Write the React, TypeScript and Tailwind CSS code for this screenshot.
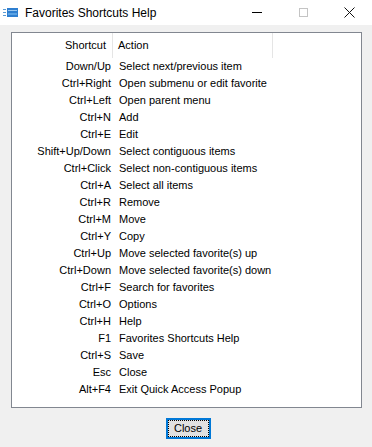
import React from 'react';

const rows: [string, string][] = [
  ['Down/Up', 'Select next/previous item'],
  ['Ctrl+Right', 'Open submenu or edit favorite'],
  ['Ctrl+Left', 'Open parent menu'],
  ['Ctrl+N', 'Add'],
  ['Ctrl+E', 'Edit'],
  ['Shift+Up/Down', 'Select contiguous items'],
  ['Ctrl+Click', 'Select non-contiguous items'],
  ['Ctrl+A', 'Select all items'],
  ['Ctrl+R', 'Remove'],
  ['Ctrl+M', 'Move'],
  ['Ctrl+Y', 'Copy'],
  ['Ctrl+Up', 'Move selected favorite(s) up'],
  ['Ctrl+Down', 'Move selected favorite(s) down'],
  ['Ctrl+F', 'Search for favorites'],
  ['Ctrl+O', 'Options'],
  ['Ctrl+H', 'Help'],
  ['F1', 'Favorites Shortcuts Help'],
  ['Ctrl+S', 'Save'],
  ['Esc', 'Close'],
  ['Alt+F4', 'Exit Quick Access Popup'],
];

function AppIcon() {
  return (
    <svg width="16" height="12" viewBox="0 0 16 12">
      <rect x="0" y="2" width="3" height="1" fill="#5a9bd5" />
      <rect x="0" y="5" width="3" height="1" fill="#5a9bd5" />
      <rect x="0" y="8" width="3" height="1" fill="#5a9bd5" />
      <rect x="4" y="1" width="11" height="9" fill="#2f7fd0" />
      <rect x="5" y="3" width="9" height="1" fill="#9cc8ef" />
      <rect x="5" y="6" width="9" height="2" fill="#5aa2e3" />
    </svg>
  );
}

export default function App() {
  return (
    <div
      className="flex h-[447px] w-[372px] flex-col bg-[#f0f0f0] text-[11px] text-black"
      style={{ fontFamily: '"Liberation Sans", Arial, sans-serif' }}
    >
      <div className="flex h-[25px] shrink-0 items-center bg-white">
        <div className="ml-[3px] mr-[6px] flex items-center">
          <AppIcon />
        </div>
        <span className="text-[12px]">Favorites Shortcuts Help</span>
        <div className="ml-auto flex h-full items-center">
          <div className="flex h-full w-[46px] items-center justify-center">
            <div className="h-px w-[10px] bg-black" />
          </div>
          <div className="flex h-full w-[46px] items-center justify-center">
            <div className="h-[9px] w-[9px] border border-[#c4c4c4]" />
          </div>
          <div className="flex h-full w-[46px] items-center justify-center">
            <svg width="11" height="11" viewBox="0 0 11 11">
              <path d="M0.5 0.5 L10.5 10.5 M10.5 0.5 L0.5 10.5" stroke="#111" strokeWidth="1" />
            </svg>
          </div>
        </div>
      </div>

      <div className="ml-[11px] mr-[10px] mt-[7px] h-[376px] shrink-0 border border-[#828790] bg-white">
        <div className="flex h-[25px] items-center">
          <div className="flex h-full w-[101px] items-center justify-end border-r border-[#e5e5e5] pr-[6px]">
            Shortcut
          </div>
          <div className="flex h-full w-[160px] items-center border-r border-[#e5e5e5] pl-[5px]">
            Action
          </div>
        </div>
        {rows.map(([k, a]) => (
          <div key={k} className="flex h-[17px] items-center">
            <div className="w-[101px] pr-[2px] text-right">{k}</div>
            <div className="pl-[6px] whitespace-nowrap">{a}</div>
          </div>
        ))}
      </div>

      <div className="mt-[10px] flex justify-center">
        <button className="ml-[4px] flex h-[21px] w-[45px] items-center justify-center border-2 border-[#0078d7] bg-[#e1e1e1] p-0">
          <span className="flex h-full w-full items-center justify-center border border-dotted border-black">
            Close
          </span>
        </button>
      </div>
    </div>
  );
}
